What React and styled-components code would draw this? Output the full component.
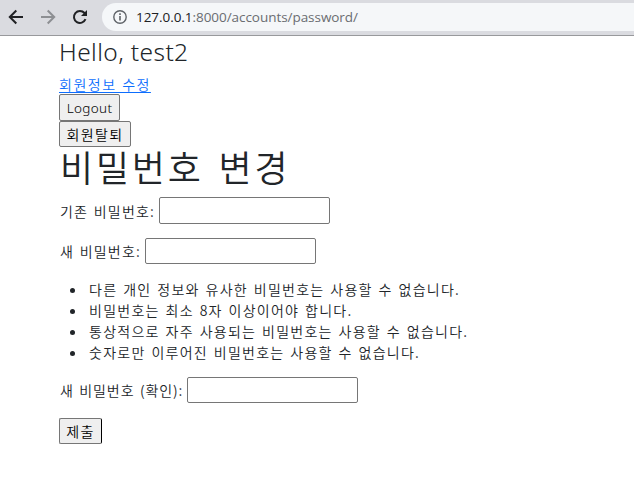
import React from "react";
import styled, { createGlobalStyle } from "styled-components";

const GlobalStyle = createGlobalStyle`
  * { box-sizing: border-box; }
  body {
    margin: 0;
    background: #fff;
    color: #212529;
    font-family: "Noto Sans CJK KR", "Noto Sans", sans-serif;
    font-size: 14px;
    font-weight: 350;
    overflow: hidden;
  }
`;

const Toolbar = styled.header`
  display: flex;
  align-items: flex-start;
  height: 36px;
  padding: 3px 0 0 8px;
  background: #dadbe0;
  border-bottom: 1px solid #98999c;
`;

const NavIcons = styled.nav`
  display: flex;
  gap: 16px;
  width: 94px;
  padding-top: 6px;
  flex: none;
`;

const NavIcon = styled.svg`
  width: 16px;
  height: 16px;
  flex: none;
  fill: none;
  stroke: ${(p) => p.$color || "#202124"};
  stroke-width: 2;
`;

const AddressBar = styled.div`
  display: flex;
  align-items: center;
  flex: 1;
  height: 28px;
  padding-left: 11px;
  gap: 9px;
  border-radius: 14px 0 0 14px;
  background: #f5f7f9;
`;

const InfoIcon = styled.svg`
  width: 14px;
  height: 14px;
  flex: none;
`;

const Url = styled.span`
  font-family: "Open Sans", "Noto Sans", sans-serif;
  font-size: 13.5px;
  font-weight: 400;
  line-height: 28px;
  letter-spacing: -0.05px;
  color: #202124;
  white-space: pre;
`;

const UrlPath = styled.span`
  color: #6a6d71;
`;

const Page = styled.main`
  display: flex;
  flex-direction: column;
  align-items: flex-start;
  padding-left: 59px;
  white-space: nowrap;
`;

const Greeting = styled.h3`
  margin: 0;
  height: 38px;
  line-height: 32px;
  font-family: "Noto Sans", sans-serif;
  font-weight: 350;
  font-size: 24.5px;
  letter-spacing: 0.4px;
`;

const Text = styled.span`
  letter-spacing: 1.25px;
  word-spacing: 1.5px;
  line-height: 21px;
`;

const EditLink = styled.a`
  height: 20px;
  line-height: 20px;
  letter-spacing: 1.5px;
  word-spacing: 1px;
  color: #0d6efd;
  text-decoration: underline;
  text-underline-offset: 2px;
`;

const Button = styled.button`
  width: ${(p) => p.$width}px;
  height: ${(p) => p.$height || 26}px;
  margin-top: ${(p) => p.$top || 0}px;
  padding: 0;
  border: 1px solid #767676;
  border-right-color: ${(p) => p.$edge || "#767676"};
  border-radius: 2px;
  background: #efefef;
  color: #000;
  font-family: ${(p) => (p.$latin ? '"Noto Sans"' : '"Noto Sans CJK KR"')}, sans-serif;
  font-size: ${(p) => (p.$latin ? 13.5 : 14)}px;
  font-weight: 350;
  line-height: 22px;
  letter-spacing: ${(p) => (p.$latin ? 0.35 : 1.4)}px;
`;

const Title = styled.h1`
  margin: 0;
  height: 50px;
  line-height: 39px;
  padding-left: 1px;
  font-size: 36px;
  font-weight: 350;
  letter-spacing: 2.8px;
  word-spacing: 4px;
`;

const Field = styled.label`
  display: flex;
  align-items: center;
  gap: 4px;
  height: ${(p) => p.$height || 26}px;
  margin-bottom: 14px;
`;

const LabelText = styled(Text)`
  width: ${(p) => p.$width}px;
  padding: 1px 0 0 1px;
  letter-spacing: ${(p) => p.$spacing || 1.15}px;
`;

const Input = styled.input`
  width: 171px;
  height: 100%;
  padding: 1px 2px;
  border: 1px solid #767676;
  border-radius: 2px;
  background: #fff;
  font: inherit;
`;

const Rules = styled.ul`
  margin: 1px 0 14px;
  padding: 0;
  list-style: none;
`;

const Rule = styled.li`
  display: flex;
  align-items: center;
  height: 21px;
  padding-left: 12px;
  &::before {
    content: "";
    width: 5px;
    height: 5px;
    margin: 2px 14px 0 -1px;
    border-radius: 50%;
    background: #212529;
  }
`;

const rules = [
  "다른 개인 정보와 유사한 비밀번호는 사용할 수 없습니다.",
  "비밀번호는 최소 8자 이상이어야 합니다.",
  "통상적으로 자주 사용되는 비밀번호는 사용할 수 없습니다.",
  "숫자로만 이루어진 비밀번호는 사용할 수 없습니다.",
];

export default function App() {
  return (
    <>
      <GlobalStyle />
      <Toolbar>
        <NavIcons>
          <NavIcon viewBox="0 0 16 16">
            <path d="M15 8H2M8.3 1.5 1.8 8l6.5 6.5" />
          </NavIcon>
          <NavIcon viewBox="0 0 16 16" $color="#8d8f93">
            <path d="M1 8h13M7.7 1.5 14.2 8l-6.5 6.5" />
          </NavIcon>
          <NavIcon viewBox="0 0 16 16">
            <path d="M13.5 10.2A6 6 0 1 1 12.5 4L14 5.5" />
            <path d="M15 1v6H9z" fill="#202124" stroke="none" />
          </NavIcon>
        </NavIcons>
        <AddressBar>
          <InfoIcon viewBox="0 0 14 14">
            <circle cx="7" cy="7" r="6.2" fill="none" stroke="#5f6368" strokeWidth="1.4" />
            <path d="M7 6v4.5M7 3.3v1.6" stroke="#5f6368" strokeWidth="1.6" />
          </InfoIcon>
          <Url>127.0.0.1<UrlPath>:8000/accounts/password/</UrlPath></Url>
        </AddressBar>
      </Toolbar>
      <Page>
        <Greeting>Hello, test2</Greeting>
        <EditLink href="#">회원정보 수정</EditLink>
        <Button $width={61} $height={27} $latin>Logout</Button>
        <Button $width={72}>회원탈퇴</Button>
        <Title>비밀번호 변경</Title>
        <Field $height={27}>
          <LabelText $width={96}>기존 비밀번호:</LabelText>
          <Input type="password" />
        </Field>
        <Field>
          <LabelText $width={82}>새 비밀번호:</LabelText>
          <Input type="password" />
        </Field>
        <Rules>
          {rules.map((rule) => (
            <Rule key={rule}><Text>{rule}</Text></Rule>
          ))}
        </Rules>
        <Field>
          <LabelText $width={124} $spacing={0.9}>새 비밀번호 (확인):</LabelText>
          <Input type="password" />
        </Field>
        <Button $width={43} $top={1} $edge="#000">제출</Button>
      </Page>
    </>
  );
}
